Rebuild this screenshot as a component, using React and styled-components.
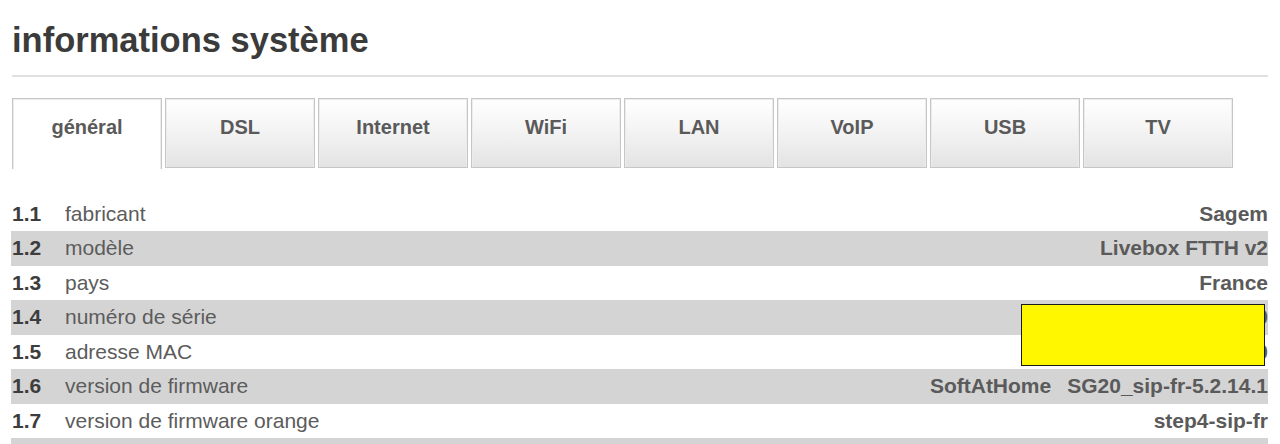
import React from "react";
import styled, { createGlobalStyle } from "styled-components";

const Global = createGlobalStyle`
  html, body { margin: 0; padding: 0; background: #fff; }
  body { font-family: "Liberation Sans", Arial, Helvetica, sans-serif; }
`;

const Page = styled.div`
  padding: 21px 12px 0 11px;
  width: 1257px;
  position: relative;
`;

const Title = styled.h1`
  margin: 0 0 0 1px;
  font-size: 34.5px;
  font-weight: bold;
  line-height: 39px;
  color: #3b3b3b;
`;

const Rule = styled.div`
  height: 2px;
  background: #e0e0e0;
  margin-top: 15px;
  margin-left: 1px;
`;

const Tabs = styled.div`
  display: flex;
  gap: 3px;
  margin-top: 21px;
  margin-left: 1px;
`;

const Tab = styled.div`
  box-sizing: border-box;
  width: 150px;
  height: ${(p) => (p.$active ? 71 : 70)}px;
  border: 1px solid #c6c6c6;
  border-bottom: ${(p) => (p.$active ? "none" : "1px solid #c6c6c6")};
  box-shadow: inset 1px 1px 0 #ececec, inset -1px 0 0 #ececec;
  background: ${(p) =>
    p.$active ? "#fff" : "linear-gradient(#ffffff 0%, #f4f4f4 45%, #e3e3e3 100%)"};
  text-align: center;
  padding-top: 16px;
  font-size: 20px;
  font-weight: bold;
  line-height: 24px;
  color: #5a5a5a;
`;

const Table = styled.div`
  margin-top: 27.5px;
  display: flex;
  flex-direction: column;
`;

const Row = styled.div`
  display: flex;
  align-items: center;
  height: 34.5px;
  line-height: 34.5px;
  font-size: 21px;
  background: ${(p) => (p.$shaded ? "#d4d4d4" : "transparent")};
`;

const Num = styled.span`
  width: 53px;
  padding-left: 1px;
  font-weight: bold;
  color: #3d3d3d;
`;

const Label = styled.span`
  flex: 1;
  color: #5c5c5c;
`;

const Value = styled.span`
  font-weight: bold;
  color: #5a5a5a;
  white-space: nowrap;
  display: flex;
  gap: 16px;
`;

const Redact = styled.div`
  position: absolute;
  left: 1021px;
  top: 304px;
  width: 242px;
  height: 60px;
  background: #fff700;
  border: 1px solid #1a1a1a;
`;

const tabs = ["général", "DSL", "Internet", "WiFi", "LAN", "VoIP", "USB", "TV"];

const rows = [
  ["1.1", "fabricant", ["Sagem"]],
  ["1.2", "modèle", ["Livebox FTTH v2"]],
  ["1.3", "pays", ["France"]],
  ["1.4", "numéro de série", ["LK12345678900"]],
  ["1.5", "adresse MAC", ["00:00:00:00:00:00"]],
  ["1.6", "version de firmware", ["SoftAtHome", "SG20_sip-fr-5.2.14.1"]],
  ["1.7", "version de firmware orange", ["step4-sip-fr"]],
  ["", "", [""]],
];

export default function App() {
  return (
    <>
      <Global />
      <Page>
        <Title>informations système</Title>
        <Rule />
        <Tabs>
          {tabs.map((t, i) => (
            <Tab key={t} $active={i === 0}>
              {t}
            </Tab>
          ))}
        </Tabs>
        <Table>
          {rows.map(([n, l, v], i) => (
            <Row key={i} $shaded={i % 2 === 1}>
              <Num>{n}</Num>
              <Label>{l}</Label>
              <Value>
                {v.map((x, j) => (
                  <span key={j}>{x}</span>
                ))}
              </Value>
            </Row>
          ))}
        </Table>
        <Redact />
      </Page>
    </>
  );
}
